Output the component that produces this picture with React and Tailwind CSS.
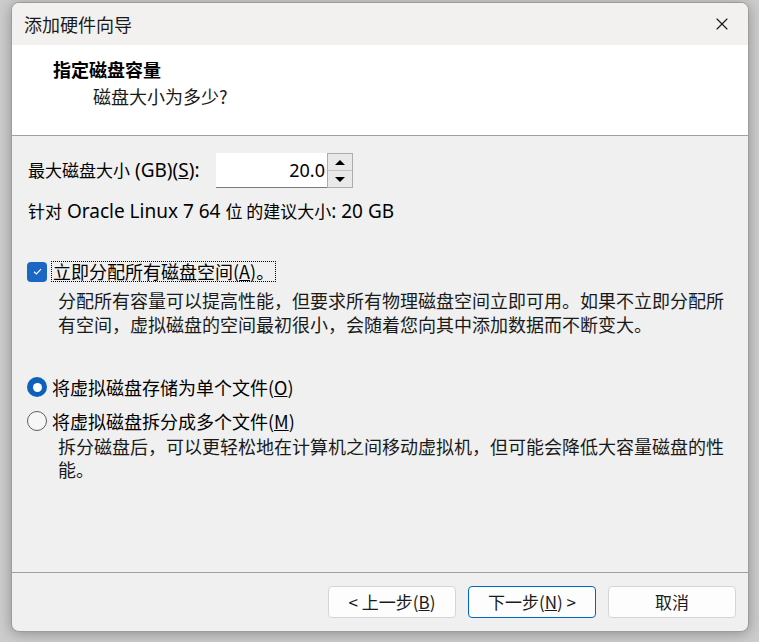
import { X } from 'lucide-react';

const sans = "font-['Noto_Sans_CJK_SC','Noto_Sans',sans-serif]";

// Latin runs in these dialogs render bigger than the CJK ones
function Lat({ children, className = 'text-[19px]' }) {
  return <span className={`font-['Noto_Sans','Noto_Sans_CJK_SC',sans-serif] ${className}`}>{children}</span>;
}

function Spin() {
  return (
    <div className="flex h-[35px] w-[137px] items-stretch">
      <div className="flex flex-1 items-center justify-end border-b border-[#7a7a7a] bg-white pr-[2px] font-['Noto_Sans',sans-serif] text-[18px] text-black">
        20.0
      </div>
      <div className="flex w-[26px] flex-col border border-[#adadad] bg-[#f0f0f0]">
        <div className="flex flex-1 items-center justify-center border-b border-[#c4c4c4] bg-[#e9e9e9]">
          <span className="h-0 w-0 border-x-[5px] border-b-[5px] border-x-transparent border-b-black" />
        </div>
        <div className="flex flex-1 items-center justify-center bg-[#e9e9e9]">
          <span className="h-0 w-0 border-x-[5px] border-t-[5px] border-x-transparent border-t-black" />
        </div>
      </div>
    </div>
  );
}

function Button({ children, primary }) {
  return (
    <button
      className={`flex h-[32px] w-[128px] items-center justify-center rounded-[4px] border bg-[#fdfdfd] text-[17px] text-[#1b1b1b] ${
        primary ? 'border-[#0067c0]' : 'border-[#d5d5d5]'
      }`}
    >
      {children}
    </button>
  );
}

export default function App() {
  return (
    <div className={`h-[642px] w-[759px] overflow-hidden bg-[#cdcdcd] pl-[11px] pt-[2px] ${sans}`}>
      <div className="flex h-[630px] w-[738px] flex-col overflow-hidden rounded-[8px] border border-[#9c9c9c] bg-[#f0f0f0] shadow-[0_2px_14px_rgba(0,0,0,0.3)]">
        {/* title bar */}
        <div className="flex h-[42px] shrink-0 items-center justify-between bg-[#f3f1ef] pl-[12px] pr-[16px]">
          <span className="text-[18px] text-[#1a1a1a]">添加硬件向导</span>
          <X className="h-[20px] w-[20px] text-[#1a1a1a]" strokeWidth={1.4} />
        </div>

        {/* header */}
        <div className="h-[91px] shrink-0 border-b border-[#a0a0a0] bg-white pl-[41px] pt-[12px]">
          <div className="text-[18px] font-bold leading-[24px] text-black">指定磁盘容量</div>
          <div className="mt-[3px] pl-[40px] text-[18px] leading-[24px] text-[#1a1a1a]">磁盘大小为多少?</div>
        </div>

        {/* body */}
        <div className="flex flex-1 flex-col border-b border-[#a0a0a0] pl-[15px] pt-[17px] text-black">
          <div className="flex items-center pl-[1px]">
            <span className="w-[188px] whitespace-nowrap text-[17px]">
              最大磁盘大小
              <Lat>
                {' '}(GB)(<u>S</u>):
              </Lat>
            </span>
            <Spin />
          </div>
          <div className="mt-[12px] whitespace-nowrap pl-[1px] text-[17px] leading-[22px]">
            针对<Lat> Oracle Linux 7 64 </Lat>位 的建议大小<Lat>: 20 GB</Lat>
          </div>

          <div className="mt-[39px] flex items-center gap-[4px]">
            <span className="flex h-[20px] w-[20px] items-center justify-center rounded-[4px] bg-[#1b67c3]">
              <svg viewBox="0 0 12 12" className="h-[11px] w-[11px]">
                <path d="M2.2 6.3 L4.8 8.7 L9.8 3.4" fill="none" stroke="white" strokeWidth="1.2" />
              </svg>
            </span>
            <span className="border border-dotted border-black px-[1px] text-[18px] leading-[19px]">
              立即分配所有磁盘空间(<u>A</u>)。
            </span>
          </div>
          <div className="mt-[6px] pl-[31px] pr-[12px] text-[18px] leading-[24px] text-[#1a1a1a]">
            分配所有容量可以提高性能，但要求所有物理磁盘空间立即可用。如果不立即分配所有空间，虚拟磁盘的空间最初很小，会随着您向其中添加数据而不断变大。
          </div>

          <div className="mt-[40px] flex items-center gap-[5px]">
            <span className="flex h-[20px] w-[20px] items-center justify-center rounded-full bg-[#0f60b9]">
              <span className="h-[9px] w-[9px] rounded-full bg-white" />
            </span>
            <span className="text-[18px] leading-[22px]">
              将虚拟磁盘存储为单个文件(<u>O</u>)
            </span>
          </div>
          <div className="mt-[12px] flex items-center gap-[5px]">
            <span className="h-[20px] w-[20px] rounded-full border border-[#5f5f5f] bg-[#f6f6f6]" />
            <span className="text-[18px] leading-[22px]">
              将虚拟磁盘拆分成多个文件(<u>M</u>)
            </span>
          </div>
          <div className="mt-[3px] pl-[31px] pr-[12px] text-[18px] leading-[23px] text-[#1a1a1a]">
            拆分磁盘后，可以更轻松地在计算机之间移动虚拟机，但可能会降低大容量磁盘的性能。
          </div>
        </div>

        {/* footer */}
        <div className="flex h-[58px] shrink-0 items-center justify-end gap-[12px] pr-[12px] pb-[1px]">
          <Button>
            &lt; 上一步(<u>B</u>)
          </Button>
          <Button primary>
            下一步(<u>N</u>) &gt;
          </Button>
          <Button>取消</Button>
        </div>
      </div>
    </div>
  );
}
